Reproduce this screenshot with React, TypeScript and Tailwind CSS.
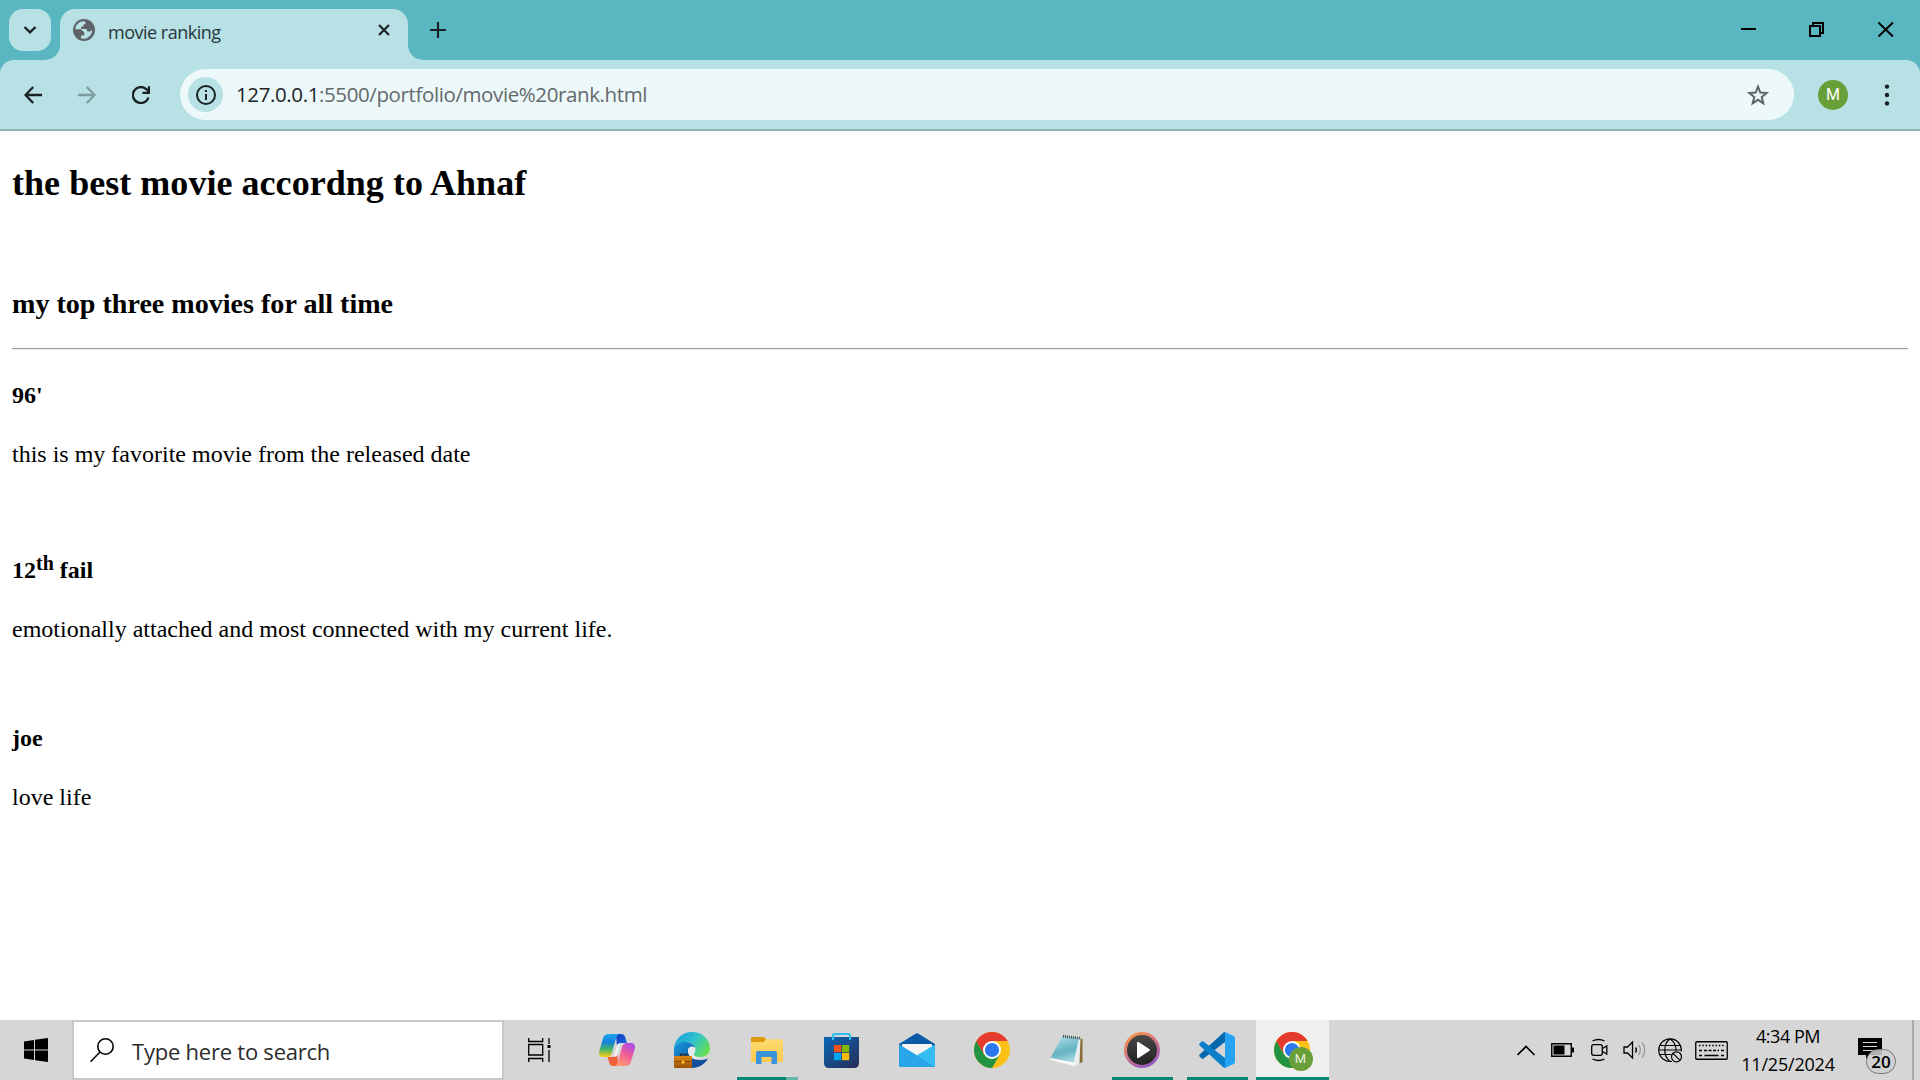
import React from "react";

const ui = "font-['Open_Sans','Noto_Sans',sans-serif]";

function ChromeLogo({ id }: { id: string }) {
  return (
    <svg width="36" height="36" viewBox="0 0 36 36">
      <defs>
        <clipPath id={id}><circle cx="18" cy="18" r="18" /></clipPath>
      </defs>
      <g clipPath={`url(#${id})`}>
        <rect width="36" height="36" fill="#fbc116" />
        <path d="M2.4 9 10.2 22.5 18 27 25.8 22.5 18 36H0V9Z" fill="#229342" />
        <path d="M2.4 9 10.2 22.5 18 18V9H36V0H0Z" fill="#e33b2e" />
      </g>
      <circle cx="18" cy="18" r="9" fill="#fff" />
      <circle cx="18" cy="18" r="7.1" fill="#2b78ee" />
    </svg>
  );
}

function Copilot() {
  return (
    <svg width="36" height="34" viewBox="0 0 36 34">
      <defs>
        <linearGradient id="cpA" x1="0" y1="0" x2="0" y2="1">
          <stop offset="0" stopColor="#16a7ee" /><stop offset=".35" stopColor="#1680dd" /><stop offset=".65" stopColor="#3fb56d" /><stop offset="1" stopColor="#ffcb12" />
        </linearGradient>
        <linearGradient id="cpB" x1=".8" y1="0" x2=".3" y2="1">
          <stop offset="0" stopColor="#a64be8" /><stop offset=".45" stopColor="#ee5a9c" /><stop offset="1" stopColor="#ff9a70" />
        </linearGradient>
        <linearGradient id="cpC" x1="0" y1="0" x2="1" y2="1">
          <stop offset="0" stopColor="#0a3bbd" /><stop offset="1" stopColor="#2470e8" />
        </linearGradient>
      </defs>
      <path d="M17 1h5c2.200 0 3.500 1 4.200 3.200L28 10h-5c-3 0-4 1-5 4Z" fill="url(#cpC)" />
      <path d="M19 33h-5c-2 0-3-1-3.700-3.200L8.500 24h5c3 0 4-1 5-4Z" fill="#f2603a" />
      <path d="M10 1h11c-2.500 0-3.400 2-4.200 5l-3.600 13c-.8 3-2 5-5.200 5H4c-3.600 0-4.600-3-3.600-6.500L4 5.500C4.900 2.500 6.500 1 10 1Z" fill="url(#cpA)" />
      <path d="M26 33H15c2.500 0 3.400-2 4.200-5l3.600-13c.8-3 2-5 5.200-5h4c3.600 0 4.600 3 3.600 6.500L32 28.500C31.100 31.500 29.500 33 26 33Z" fill="url(#cpB)" />
      <path d="M19.500 10.500h2.800c-1 1-1.500 2.500-2 4.500l-2.500 8.500h-3.600c.8-1 1.300-2.500 1.800-4.500l1.600-5.500c.5-1.800 1-2.600 1.900-3Z" fill="#f1eef3" />
    </svg>
  );
}

function Edge() {
  return (
    <svg width="36" height="36" viewBox="0 0 36 36">
      <defs>
        <linearGradient id="edA" x1="0" y1=".2" x2="1" y2=".7">
          <stop offset="0" stopColor="#1b9fe0" /><stop offset=".5" stopColor="#2fc3cd" /><stop offset="1" stopColor="#6be04d" />
        </linearGradient>
        <linearGradient id="edB" x1="0" y1="0" x2="1" y2="1">
          <stop offset="0" stopColor="#1b9de3" /><stop offset="1" stopColor="#0c59a4" />
        </linearGradient>
        <linearGradient id="edC" x1="0" y1="0" x2="0" y2="1">
          <stop offset="0" stopColor="#dc8514" /><stop offset="1" stopColor="#9a5508" />
        </linearGradient>
      </defs>
      <path d="M14 15h8l4 11-8 2-4-5Z" fill="#e4eaee" />
      <path d="M14 17c-1 7 4 11 11 11 4 0 6-.5 9-1.500C31 32 25 36 18 36c-8 0-10-7-9-12Z" fill="#134e9b" />
      <path d="M0 16C1 7 8 0 18 0c10.500 0 18 7.500 18 16.500 0 5.500-4.500 8.500-10 8.500-5 0-7-2-5.500-4 2.500-3.500.5-9-5.500-10.500C8 9 2.500 11.500 0 16Z" fill="url(#edA)" />
      <path d="M0 16c2.500-5 9-7.500 15-5.500 3 1 5.500 3 6 5-4-2.500-8 .5-7.500 5L14 26H0Z" fill="url(#edB)" />
      <path d="M6.500 24v-1.500h6V24" fill="none" stroke="#2b2b2b" strokeWidth="1.500" />
      <rect y="24" width="18" height="12" rx=".8" fill="url(#edC)" />
      <path d="M0 29.500h18" stroke="#7d4305" strokeWidth=".8" />
      <rect x="7.700" y="28.500" width="2.600" height="3" fill="#ffc928" />
    </svg>
  );
}

function Explorer() {
  return (
    <svg width="32" height="27" viewBox="0 0 32 27">
      <defs>
        <linearGradient id="exA" x1="0" y1="0" x2="0" y2="1">
          <stop offset="0" stopColor="#ffdb72" /><stop offset="1" stopColor="#fbc94c" />
        </linearGradient>
      </defs>
      <path d="M0 1.200Q0 0 1.200 0H12q1 0 1.700.8L15.500 2.500V5H0Z" fill="#dd9a0c" />
      <path d="M0 5h12.500L15 2.200h15.800Q32 2.200 32 3.500v20.300q0 1.200-1.200 1.200H1.200Q0 25 0 23.800Z" fill="url(#exA)" />
      <path d="M5 27V15.500Q5 14 6.500 14h18q1.500 0 1.500 1.500V27h-5.500v-7h-10v7Z" fill="#3c93db" />
    </svg>
  );
}

function Store() {
  return (
    <svg width="35" height="35" viewBox="0 0 35 35">
      <defs>
        <linearGradient id="stA" x1="0" y1="0" x2="1" y2="1">
          <stop offset="0" stopColor="#0a68b8" /><stop offset="1" stopColor="#272d56" />
        </linearGradient>
      </defs>
      <path d="M0 4h35v26q0 5-5 5H5q-5 0-5-5Z" fill="url(#stA)" />
      <path d="M9 7V2.500Q9 1 10.500 1h14Q26 1 26 2.500V7" fill="none" stroke="#2dbdf2" strokeWidth="2" />
      <rect x="10" y="12" width="7.200" height="7.200" fill="#f1511b" />
      <rect x="18" y="12" width="7.200" height="7.200" fill="#7fba00" />
      <rect x="10" y="20" width="7.200" height="7.200" fill="#00a4ef" />
      <rect x="18" y="20" width="7.200" height="7.200" fill="#fbb909" />
    </svg>
  );
}

function Mail() {
  return (
    <svg width="36" height="34" viewBox="0 0 36 34">
      <path d="M0 11 16.500.7q1.500-.9 3 0L36 11v4H0Z" fill="#0a5aa8" />
      <path d="M3 11h30v6L18 25 3 17Z" fill="#f4f4f4" />
      <path d="M0 11.500 18 22.300 36 11.500V34H0Z" fill="#35bdf3" />
      <path d="M0 11.500 36 34H0Z" fill="#28a6e8" />
    </svg>
  );
}

function Notepad() {
  return (
    <svg width="34" height="33" viewBox="0 0 34 33">
      <defs>
        <linearGradient id="npA" x1=".3" y1="0" x2=".6" y2="1">
          <stop offset="0" stopColor="#a9dbe4" /><stop offset=".6" stopColor="#64b3c4" /><stop offset="1" stopColor="#a7d8e0" />
        </linearGradient>
      </defs>
      <path d="m29 4 3.500 1v23L26 31Z" fill="#8a6a35" />
      <path d="m29 4 1.500.5-1 25L25 32.500 5 27Z" fill="#e8edef" />
      <path d="M12.500 2 29 4l-5.500 24.500L.5 24Z" fill="url(#npA)" />
      <path d="m.5 24 23 4.500 1 3.500L1 26Z" fill="#f6f8f8" />
      <path d="m13 2.200 17 2" stroke="#4d5255" strokeWidth="2.800" strokeDasharray="1 1" />
    </svg>
  );
}

function Player() {
  return (
    <svg width="36" height="36" viewBox="0 0 36 36">
      <defs>
        <linearGradient id="plA" x1=".2" y1="0" x2=".7" y2="1">
          <stop offset="0" stopColor="#ff9445" /><stop offset=".5" stopColor="#cf7386" /><stop offset="1" stopColor="#8f58c9" />
        </linearGradient>
        <linearGradient id="plB" x1="0" y1="0" x2="0" y2="1">
          <stop offset="0" stopColor="#474747" /><stop offset="1" stopColor="#222" />
        </linearGradient>
      </defs>
      <circle cx="18" cy="18" r="18" fill="url(#plA)" />
      <circle cx="18" cy="18" r="15" fill="url(#plB)" />
      <path d="M14 10.800v14.400L25 18Z" fill="#fff" stroke="#fff" strokeWidth="2" strokeLinejoin="round" />
    </svg>
  );
}

function VsCode() {
  return (
    <svg width="36" height="36" viewBox="0 0 36 36">
      <path d="M26 0v10L4.500 26.400q-1 .7-1.900 0L.6 24.600q-1-1 0-2L24.500.6Z" fill="#0768ae" />
      <path d="M26 36V26L4.500 9.600q-1-.7-1.900 0L.6 11.400q-1 1 0 2l23.900 22Z" fill="#0c7fcb" />
      <path d="M26 0l8.700 4Q36 4.700 36 6v24q0 1.400-1.300 2L26 36Z" fill="#27a3f3" />
    </svg>
  );
}

function Slot({ children, bar, active }: { children: React.ReactNode; bar?: "full" | "stacked"; active?: boolean }) {
  return (
    <div className={`relative mx-px flex h-[60px] w-[73px] items-center justify-center pr-[2px] ${active ? "bg-[#efefef]" : ""}`}>
      {children}
      {bar && (
        <div className={`absolute bottom-0 flex h-[3px] ${active ? "inset-x-0" : "inset-x-[6px]"}`}>
          <div className="flex-1 bg-[#048876]" />
          {bar === "stacked" && <div className="w-3 bg-[#66b5aa]" />}
        </div>
      )}
    </div>
  );
}

function TabStrip() {
  return (
    <div className="flex h-[60px] bg-[#5ab7c1]">
      <div className="mt-[9px] ml-[9px] flex size-[42px] items-center justify-center rounded-[14px] bg-[#b7e1e4]">
        <svg width="14" height="10" viewBox="0 0 14 10"><path d="m1.500 2 5.500 5.300L12.500 2" fill="none" stroke="#1b2224" strokeWidth="2.400" /></svg>
      </div>
      <div className="relative mt-[9px] ml-[9px] flex h-[51px] w-[348px] rounded-t-[15px] bg-[#b7e1e4]">
        <svg className="absolute bottom-0 -left-[15px]" width="15" height="15"><path d="M0 15A15 15 0 0 0 15 0V15Z" fill="#b7e1e4" /></svg>
        <svg className="absolute -right-[15px] bottom-0" width="15" height="15"><path d="M15 15A15 15 0 0 1 0 0V15Z" fill="#b7e1e4" /></svg>
        <svg className="mt-[10px] ml-[13px]" width="22" height="22" viewBox="0 0 22 22">
          <circle cx="11" cy="11" r="11" fill="#5f6368" />
          <path d="M2.200 10.200C2.600 5.800 6 2.500 10.500 2.200L12.500 3v2.200H10.500V7.500H8.200V10H13.300l1.300 2.600h2.300l2.300-1.400C19 16 15.200 19.700 10.500 19.800L8 19.200V16.500h3.300v-3L8 10.200Z" fill="#b7e1e4" />
        </svg>
        <span className={`${ui} mt-[10px] ml-[13px] flex-1 text-[18px] leading-[26px] tracking-[-0.490px] text-[#26353a]`}>movie ranking</span>
        <svg className="mt-[15px] mr-[18px]" width="12" height="12" viewBox="0 0 12 12"><path d="m1 1 10 10M11 1 1 11" stroke="#1b2224" strokeWidth="2.200" /></svg>
      </div>
      <svg className="mt-[22px] ml-[22px]" width="16" height="16" viewBox="0 0 16 16"><path d="M8 0v16M0 8h16" stroke="#1b2224" strokeWidth="2.200" /></svg>
      <div className="mt-[22px] mr-[26px] ml-auto flex">
        <svg width="16" height="15" viewBox="0 0 16 15"><path d="M0 7h15" stroke="#000" strokeWidth="2" /></svg>
        <svg className="ml-[52px]" width="15" height="15" viewBox="0 0 15 15"><path d="M1 4h10v10H1ZM4 4V1h10v10h-3" fill="none" stroke="#000" strokeWidth="2" /></svg>
        <svg className="ml-[54px]" width="16" height="15" viewBox="0 0 16 15"><path d="m.4.500 14.600 14M15 .500.4 14.500" stroke="#000" strokeWidth="2" /></svg>
      </div>
    </div>
  );
}

function Toolbar() {
  return (
    <div className="bg-[#5ab7c1]">
      <div className="flex h-[69px] items-center rounded-t-[14px] bg-[#b7e1e4]">
        <svg className="ml-6" width="18" height="18" viewBox="0 0 18 18"><path d="M18 9H1.500M9.200 1 1.500 9l7.700 8" fill="none" stroke="#1b2224" strokeWidth="2.300" /></svg>
        <svg className="ml-9" width="18" height="18" viewBox="0 0 18 18"><path d="M0 9h16.500M8.800 1l7.700 8-7.700 8" fill="none" stroke="#7d9c9f" strokeWidth="2.300" /></svg>
        <svg className="ml-9" width="18" height="18" viewBox="0 0 18 18"><path d="M16.500 11.500A8 8 0 1 1 14.600 3.400L17 5.700M17 .3v6.500h-6.500" fill="none" stroke="#1b2224" strokeWidth="2.300" /></svg>
        <div className="ml-[30px] flex h-[51px] w-[1614px] items-center rounded-full bg-[#ecf8f9] pl-2">
          <div className="flex size-[35px] items-center justify-center rounded-full bg-[#b7e1e4]">
            <svg width="20" height="20" viewBox="0 0 20 20"><circle cx="10" cy="10" r="9" fill="none" stroke="#1b2224" strokeWidth="2" /><path d="M10 9v6M10 5v2" stroke="#1b2224" strokeWidth="2" /></svg>
          </div>
          <span className={`${ui} mb-px ml-[13px] flex-1 text-[20.500px] leading-7 tracking-[-0.390px] text-[#64696c]`}><span className="text-[#1c2427]">127.0.0.1</span>:5500/portfolio/movie%20rank.html</span>
          <svg className="mr-6" width="23" height="22" viewBox="0 0 23 22"><path d="m11 2.700 2.300 5.900 6.300.5-4.900 4 1.600 6.200-5.300-3.500-5.300 3.500 1.600-6.200-4.900-4 6.300-.5Z" fill="none" stroke="#5f6368" strokeWidth="2" /></svg>
        </div>
        <div className="ml-6 flex size-[30px] items-center justify-center rounded-full bg-[#689f38] pt-px font-[Roboto,sans-serif] text-[16px] text-white">M</div>
        <svg className="ml-[36px]" width="6" height="22" viewBox="0 0 6 22" fill="#1b2224"><circle cx="3" cy="2.600" r="2.200" /><circle cx="3" cy="11" r="2.200" /><circle cx="3" cy="19.400" r="2.200" /></svg>
      </div>
      <div className="h-[2px] bg-[#8fb4b7]" />
    </div>
  );
}

function MoviePage() {
  return (
    <main className="flex-1 bg-white px-3 font-['Liberation_Serif',serif] text-[24px] leading-[27px] text-black">
      <h2 className="pt-8 text-[36px] leading-10 font-bold tracking-[0.040px]">the best movie accordng to Ahnaf</h2>
      <h3 className="mt-[85px] text-[28.080px] leading-8 font-bold">my top three movies for all time</h3>
      <div className="mt-7 h-[2px] border-t border-b border-t-[#9a9a9a] border-b-[#ededed]" />
      <h4 className="mt-8 font-bold">96'</h4>
      <p className="mt-8">this is my favorite movie from the released date</p>
      <h4 className="mt-[89px] font-bold">12<span className="relative -top-2 text-[20px] leading-none">th</span> fail</h4>
      <p className="mt-8">emotionally attached and most connected with my current life.</p>
      <h4 className="mt-[82px] font-bold">joe</h4>
      <p className="mt-8">love life</p>
    </main>
  );
}

function Tray() {
  return (
    <div className="ml-auto flex h-[60px] items-center">
      <svg width="19" height="11" viewBox="0 0 19 11"><path d="m.5 10 8.500-8.500L17.500 10" fill="none" stroke="#000" strokeWidth="1.600" /></svg>
      <svg className="ml-[15px]" width="23" height="14" viewBox="0 0 23 14"><path d="M.75.750h19.500v12.500H.75Z" fill="none" stroke="#000" strokeWidth="1.400" /><path d="M2.500 2.500H13.500v9H2.500ZM21 4.500h2v5h-2Z" /></svg>
      <svg className="ml-[16px]" width="19" height="24" viewBox="0 0 19 24" fill="none" stroke="#000" strokeWidth="1.300"><rect x="1.700" y="6.700" width="10.600" height="10.600" rx="2" /><path d="m12.500 10.500 4.300-2.500v8l-4.300-2.500M2.500 3q6-3 12 0M2.500 21q6 3 12 0" /></svg>
      <svg className="ml-[14px]" width="24" height="20" viewBox="0 0 24 20" fill="none" stroke="#000" strokeWidth="1.300"><path d="M1 7h3.500L9.500 2v16L4.500 13H1Z" /><path d="M12.500 7.500q1.800 2.500 0 5" /><path d="M15.500 5q3.800 5 0 10M19 2.500q5.500 7.500 0 15" stroke="#9a9a9a" /></svg>
      <svg className="ml-[11px]" width="25" height="25" viewBox="0 0 25 25" fill="none" stroke="#000" strokeWidth="1.200">
        <path d="M14 23.300A11.300 11.300 0 1 1 23.300 13.500M12 .7C5 6 5 18 12 23.300M12 .7c4.500 3.300 6.300 7.300 6 12M2.300 7.500h19.400M2.300 16.500h11M.7 12h22.600" />
        <circle cx="18.500" cy="18.800" r="5" fill="#d6d6d6" />
        <path d="m15 15.300 7 7" />
      </svg>
      <svg className="ml-[12px]" width="33" height="19" viewBox="0 0 33 19" fill="none" stroke="#000" strokeWidth="1.300"><rect x=".75" y=".75" width="31.500" height="17.500" rx="1" /><path d="M4 4.500h25" strokeDasharray="1.500 1.800" /><path d="M4 9.500h3M9 9.500h15" strokeDasharray="3 1.500" /><path d="M26 9.500h3M4 14.500h3M9.500 14.500h14M26 14.500h3" /></svg>
      <div className={`${ui} ml-[12px] flex w-[96px] flex-col items-center text-[18px] leading-7 whitespace-nowrap text-black`}>
        <span className="tracking-[-0.460px]">4:34 PM</span>
        <span className="tracking-[-0.200px]">11/25/2024</span>
      </div>
      <div className="relative ml-[22px] h-[38px] w-[40px]">
        <svg className="absolute top-[7px] left-0" width="24" height="24" viewBox="0 0 24 24"><path d="M0 0h24v17H12l-4 4v-4H0Z" /><path d="M5 4.500h14M5 8.500h14M5 12.500h14" stroke="#d6d6d6" strokeWidth="1" /></svg>
        <div className={`${ui} absolute top-[18px] left-[8px] flex h-[25px] w-[30px] items-center justify-center rounded-full border border-[#777] bg-[#cfcfcf]/85 text-[17px] font-semibold text-black`}>20</div>
      </div>
      <div className="ml-[14px] h-[60px] w-[2px] bg-[#a9a9a9]" />
      <div className="w-[6px]" />
    </div>
  );
}

function Taskbar() {
  return (
    <footer className="flex h-[60px] bg-[#d6d6d6]">
      <div className="flex w-[72px] items-center justify-center">
        <svg width="24" height="24" viewBox="0 0 24 24"><path d="M0 3.400 10 2v9.500H0ZM11 1.800 24 0v11.500H11ZM0 12.500h10V22L0 20.600ZM11 12.500h13V24L11 22.200Z" /></svg>
      </div>
      <div className="flex h-[60px] w-[432px] items-center border-2 border-[#c8c8c8] bg-white">
        <svg className="ml-[16px]" width="25" height="25" viewBox="0 0 25 25"><circle cx="15.500" cy="8.500" r="7.700" fill="none" stroke="#000" strokeWidth="1.600" /><path d="m10 14-9.500 9.800" stroke="#000" strokeWidth="1.600" /></svg>
        <span className={`${ui} mt-[2px] ml-[17px] text-[22px] tracking-[-0.230px] text-[#2c2c2c]`}>Type here to search</span>
      </div>
      <div className="flex w-[76px] items-center justify-center pr-[3px]">
        <svg width="25" height="24" viewBox="0 0 25 24" fill="none" stroke="#000" strokeWidth="1.300"><path d="M.7 0v3.500h14V0M.7 6.500h14v10.500H.7ZM.7 24v-3.500h14V24M21 0v6M21 12v12" /><path d="M19.500 7h3v3h-3Z" fill="#000" stroke="none" /></svg>
      </div>
      <div className="flex">
        <Slot><Copilot /></Slot>
        <Slot><Edge /></Slot>
        <Slot bar="stacked"><Explorer /></Slot>
        <Slot><Store /></Slot>
        <Slot><Mail /></Slot>
        <Slot><ChromeLogo id="chromeA" /></Slot>
        <Slot><Notepad /></Slot>
        <Slot bar="full"><Player /></Slot>
        <Slot bar="full"><VsCode /></Slot>
        <Slot bar="full" active>
          <div className="relative">
            <ChromeLogo id="chromeB" />
            <div className="absolute top-[15px] left-[15px] flex size-6 items-center justify-center rounded-full bg-[#689f38] font-[Roboto,sans-serif] text-[13px] text-[#e6f0dc]">M</div>
          </div>
        </Slot>
      </div>
      <Tray />
    </footer>
  );
}

export default function App() {
  return (
    <div className="flex h-[1080px] w-[1920px] flex-col overflow-hidden bg-white">
      <TabStrip />
      <Toolbar />
      <MoviePage />
      <Taskbar />
    </div>
  );
}
